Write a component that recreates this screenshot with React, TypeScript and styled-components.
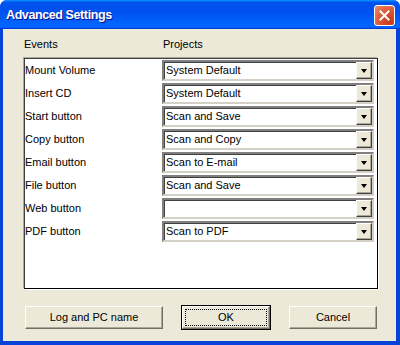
import React from "react";
import styled, { createGlobalStyle } from "styled-components";

const GlobalStyle = createGlobalStyle`
  html, body { margin: 0; padding: 0; background: #fff; }
  body { font-family: "Liberation Sans", Arial, sans-serif; font-size: 11px; color: #000; }
`;

const Window = styled.div`
  width: 400px;
  height: 345px;
  display: flex;
  flex-direction: column;
  background: #0842d6;
  border-radius: 7px 7px 0 0;
  overflow: hidden;
  box-sizing: border-box;
`;

const TitleBar = styled.div`
  height: 29px;
  flex: none;
  display: flex;
  align-items: center;
  justify-content: space-between;
  padding: 0 5px 0 6px;
  background: linear-gradient(
    180deg,
    #0997ff,
    #0053ee 8%,
    #0050ee 40%,
    #0066ff 88%,
    #0066ff 93%,
    #005bff 95%,
    #003dd7 96%,
    #003dd7
  );
`;

const Title = styled.span`
  font-family: "Liberation Sans", Arial, sans-serif;
  font-weight: bold;
  font-size: 12.5px;
  color: #fff;
  text-shadow: 1px 1px 0 #0f1089;
  letter-spacing: -0.4px;
`;

const CloseButton = styled.div`
  width: 21px;
  height: 21px;
  box-sizing: border-box;
  border: 1px solid #fff;
  border-radius: 3px;
  background: radial-gradient(circle at 85% 85%, #c73a1b 0%, #d9532f 45%, #eb8a6b 100%);
  display: flex;
  align-items: center;
  justify-content: center;
  margin-top: 1px;
`;

const Body = styled.div`
  flex: 1;
  margin: 0 4px 4px 3px;
  background: #ece9d8;
  padding: 9px 18px 0 21px;
  display: flex;
  flex-direction: column;
`;

const HeaderRow = styled.div`
  display: grid;
  grid-template-columns: 139px 1fr;
  line-height: 13px;
  height: 13px;
`;

const ListBox = styled.div`
  margin-top: 7px;
  width: 354px;
  height: 231px;
  box-sizing: border-box;
  background: #fff;
  border: 1px solid #000;
  border-top-color: #404040;
  border-left-color: #404040;
  box-shadow: -1px -1px 0 #aca899, 1px 1px 0 #fff;
  padding: 1px 0 0 0;
`;

const Row = styled.div`
  display: grid;
  grid-template-columns: 137px 212px;
  align-items: center;
  height: 21px;
  margin-bottom: 2px;
`;

const Label = styled.span`
  line-height: 13px;
  white-space: nowrap;
`;

const Combo = styled.div`
  height: 21px;
  box-sizing: border-box;
  display: flex;
  align-items: stretch;
  background: #fff;
  border-style: solid;
  border-width: 2px;
  border-color: #808080 #d4d0c8 #d4d0c8 #808080;
  box-shadow: inset 1px 1px 0 #404040;
`;

const ComboText = styled.span`
  flex: 1;
  padding: 0 0 0 2px;
  line-height: 17px;
  white-space: nowrap;
  overflow: hidden;
`;

const DropButton = styled.div`
  width: 16px;
  flex: none;
  box-sizing: border-box;
  background: #ece9d8;
  border-style: solid;
  border-width: 1px;
  border-color: #fff #404040 #404040 #fff;
  box-shadow: inset -1px -1px 0 #aca899;
  display: flex;
  align-items: center;
  justify-content: center;
`;

const Arrow = styled.span`
  width: 0;
  height: 0;
  border-left: 3.5px solid transparent;
  border-right: 3.5px solid transparent;
  border-top: 4px solid #000;
  margin-top: 1px;
`;

const ButtonRow = styled.div`
  margin-top: 16px;
  width: 354px;
  display: grid;
  grid-template-columns: 140px 90px 90px;
  justify-content: space-between;
`;

const Button = styled.div<{ $default?: boolean }>`
  height: 25px;
  box-sizing: border-box;
  background: #ece9d8;
  border: 1px solid ${(p) => (p.$default ? "#000" : "transparent")};
  display: flex;
  align-items: stretch;
`;

const ButtonFace = styled.div`
  flex: 1;
  box-sizing: border-box;
  border-style: solid;
  border-width: 1px;
  border-color: #fff #716f64 #716f64 #fff;
  box-shadow: inset -1px -1px 0 #aca899;
  display: flex;
  align-items: center;
  justify-content: center;
  padding: 2px;
`;

const FocusRect = styled.div<{ $focus?: boolean }>`
  flex: 1;
  align-self: stretch;
  display: flex;
  align-items: center;
  justify-content: center;
  border: 1px dotted ${(p) => (p.$focus ? "#000" : "transparent")};
  line-height: 13px;
`;

const rows: [string, string][] = [
  ["Mount Volume", "System Default"],
  ["Insert CD", "System Default"],
  ["Start button", "Scan and Save"],
  ["Copy button", "Scan and Copy"],
  ["Email button", "Scan to E-mail"],
  ["File button", "Scan and Save"],
  ["Web button", ""],
  ["PDF button", "Scan to PDF"],
];

export default function App() {
  return (
    <>
      <GlobalStyle />
      <Window>
        <TitleBar>
          <Title>Advanced Settings</Title>
          <CloseButton>
            <svg width="11" height="11" viewBox="0 0 11 11">
              <path d="M1.5 1.5 L9.5 9.5 M9.5 1.5 L1.5 9.5" stroke="#fff" strokeWidth="2" strokeLinecap="square" />
            </svg>
          </CloseButton>
        </TitleBar>
        <Body>
          <HeaderRow>
            <span>Events</span>
            <span>Projects</span>
          </HeaderRow>
          <ListBox>
            {rows.map(([label, value]) => (
              <Row key={label}>
                <Label>{label}</Label>
                <Combo>
                  <ComboText>{value}</ComboText>
                  <DropButton>
                    <Arrow />
                  </DropButton>
                </Combo>
              </Row>
            ))}
          </ListBox>
          <ButtonRow>
            <Button>
              <ButtonFace>
                <FocusRect>Log and PC name</FocusRect>
              </ButtonFace>
            </Button>
            <Button $default>
              <ButtonFace>
                <FocusRect $focus>OK</FocusRect>
              </ButtonFace>
            </Button>
            <Button>
              <ButtonFace>
                <FocusRect>Cancel</FocusRect>
              </ButtonFace>
            </Button>
          </ButtonRow>
        </Body>
      </Window>
    </>
  );
}
